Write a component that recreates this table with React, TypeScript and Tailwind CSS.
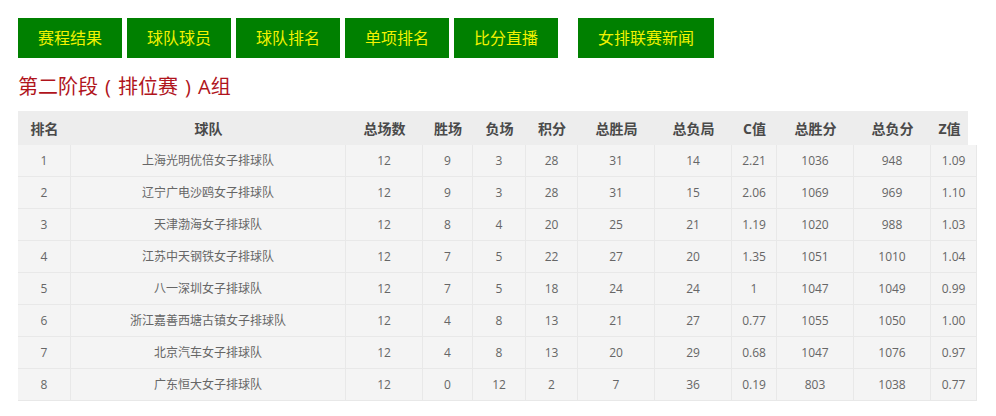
import React from "react";

const navs = ["赛程结果", "球队球员", "球队排名", "单项排名", "比分直播"];

const heads = ["排名", "球队", "总场数", "胜场", "负场", "积分", "总胜局", "总负局", "C值", "总胜分", "总负分", "Z值"];

const rows = [
  ["1", "上海光明优倍女子排球队", "12", "9", "3", "28", "31", "14", "2.21", "1036", "948", "1.09"],
  ["2", "辽宁广电沙鸥女子排球队", "12", "9", "3", "28", "31", "15", "2.06", "1069", "969", "1.10"],
  ["3", "天津渤海女子排球队", "12", "8", "4", "20", "25", "21", "1.19", "1020", "988", "1.03"],
  ["4", "江苏中天钢铁女子排球队", "12", "7", "5", "22", "27", "20", "1.35", "1051", "1010", "1.04"],
  ["5", "八一深圳女子排球队", "12", "7", "5", "18", "24", "24", "1", "1047", "1049", "0.99"],
  ["6", "浙江嘉善西塘古镇女子排球队", "12", "4", "8", "13", "21", "27", "0.77", "1055", "1050", "1.00"],
  ["7", "北京汽车女子排球队", "12", "4", "8", "13", "20", "29", "0.68", "1047", "1076", "0.97"],
  ["8", "广东恒大女子排球队", "12", "0", "12", "2", "7", "36", "0.19", "803", "1038", "0.77"],
];

const font = { fontFamily: '"Open Sans", "Noto Sans CJK SC", sans-serif' };

const App = () => {
  return (
    <div className="w-[996px] h-[416px] bg-white pl-[18px] pt-[18px]" style={font}>
      <div className="flex">
        {navs.map((n) => (
          <div key={n} className="w-[104px] h-[40px] mr-[5px] bg-[#008000] text-[#f2f200] text-[16px] flex items-center justify-center">
            {n}
          </div>
        ))}
        <div className="w-[136px] h-[40px] ml-[15px] bg-[#008000] text-[#f2f200] text-[16px] flex items-center justify-center">
          女排联赛新闻
        </div>
      </div>
      <h2 className="mt-[16px] h-[26px] leading-[26px] text-[20px] text-[#b0141c] flex">
        <span>第二阶段</span>
        <span className="w-[20px] text-center">(</span>
        <span>排位赛</span>
        <span className="w-[20px] text-center">)</span>
        <span>A组</span>
      </h2>
      <div className="mt-[11px]">
        <div className="w-[950px] grid grid-cols-[53px_275px_77px_50px_53px_52px_77px_77px_45px_77px_77px_37px] h-[34px] bg-[#ededed] text-[14px] font-bold text-[#4a4a4a]">
          {heads.map((h) => (
            <div key={h} className="flex items-center justify-center">{h}</div>
          ))}
        </div>
        <div className="w-[959px]">
          {rows.map((r) => (
            <div key={r[0]} className="grid grid-cols-[53px_275px_77px_50px_53px_52px_77px_77px_45px_77px_77px_46px] h-[32px] text-[12px] text-[#666]">
              {r.map((c, i) => (
                <div key={i} className="flex items-center justify-center bg-[#f4f4f4] border-r border-b border-[#e8e8e8]">
                  {c}
                </div>
              ))}
            </div>
          ))}
        </div>
      </div>
    </div>
  );
};

export default App;
